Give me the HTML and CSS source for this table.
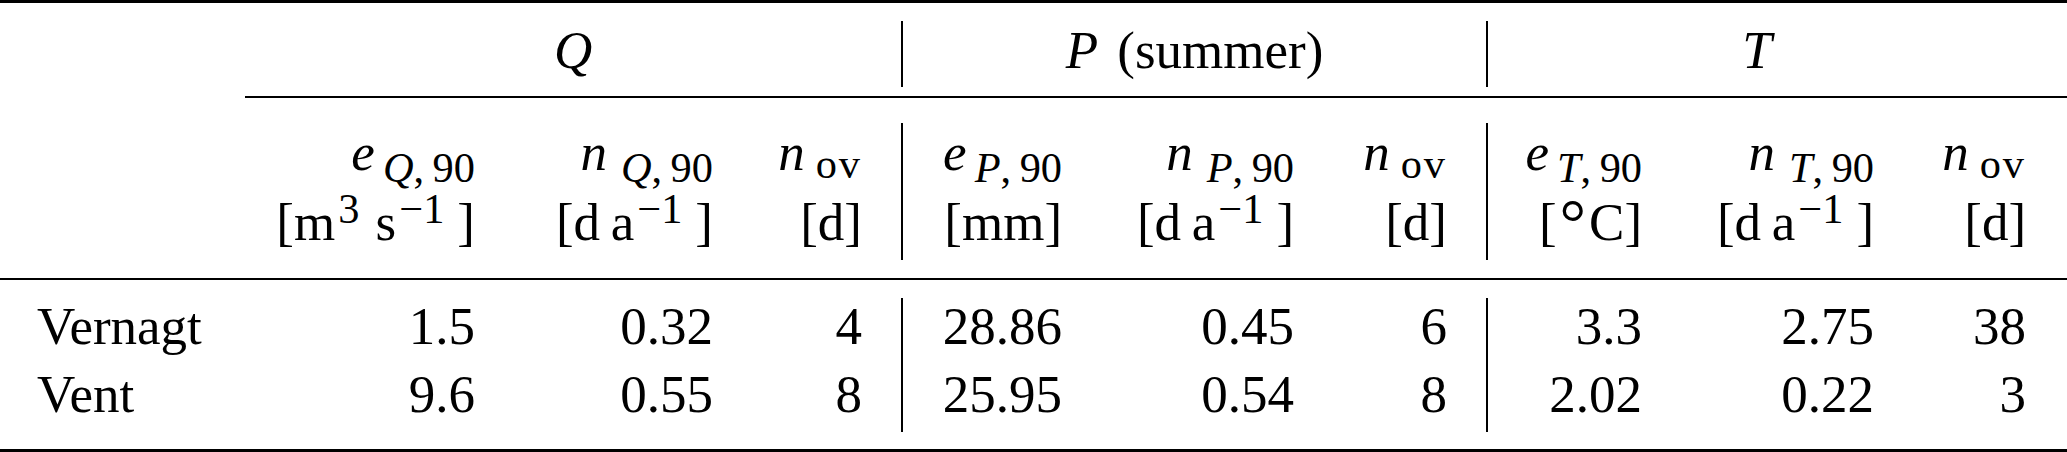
FILE: index.html
```html
<!DOCTYPE html>
<html>
<head>
  <title>Extremes - Vernagt and Vent</title>
  <link rel="stylesheet" href="styles.css">
</head>
<body>
  <table class="extremes">
    <colgroup>
      <col class="w-stub">
      <col class="w-eq"><col class="w-nq"><col class="w-ov1">
      <col class="w-ep"><col class="w-np"><col class="w-ov2">
      <col class="w-et"><col class="w-nt"><col class="w-ov3">
    </colgroup>

    <tr class="groups">
      <td class="stub"><div></div></td>
      <td colspan="3"><div><i>Q</i></div></td>
      <td colspan="3"><div class="vl"><i class="gp">P</i> (summer)</div></td>
      <td colspan="3"><div class="vl"><i>T</i></div></td>
    </tr>

    <tr class="heads">
      <td class="stub"><div></div></td>
      <td><div>
        <div class="sym"><i>e</i><sub><i>Q</i>,&thinsp;90</sub></div>
        <div class="unit">[m<sup>3</sup> s<sup class="end">−1</sup>]</div>
      </div></td>
      <td><div>
        <div class="sym"><i>n</i><sub class="wide"><i>Q</i>,&thinsp;90</sub></div>
        <div class="unit">[d&thinsp;a<sup class="end">−1</sup>]</div>
      </div></td>
      <td><div>
        <div class="sym"><i>n</i><sub class="ov">ov</sub></div>
        <div class="unit">[d]</div>
      </div></td>
      <td><div class="vl">
        <div class="sym"><i>e</i><sub><i>P</i>,&thinsp;90</sub></div>
        <div class="unit">[mm]</div>
      </div></td>
      <td><div>
        <div class="sym"><i>n</i><sub class="wide"><i>P</i>,&thinsp;90</sub></div>
        <div class="unit">[d&thinsp;a<sup class="end">−1</sup>]</div>
      </div></td>
      <td><div>
        <div class="sym"><i>n</i><sub class="ov">ov</sub></div>
        <div class="unit">[d]</div>
      </div></td>
      <td><div class="vl">
        <div class="sym"><i>e</i><sub><i>T</i>,&thinsp;90</sub></div>
        <div class="unit">[<span class="deg">°</span>C]</div>
      </div></td>
      <td><div>
        <div class="sym"><i>n</i><sub class="wide"><i>T</i>,&thinsp;90</sub></div>
        <div class="unit">[d&thinsp;a<sup class="end">−1</sup>]</div>
      </div></td>
      <td><div>
        <div class="sym"><i>n</i><sub class="ov">ov</sub></div>
        <div class="unit">[d]</div>
      </div></td>
    </tr>

    <tr class="data first">
      <td class="stub"><div>Vernagt</div></td>
      <td><div>1.5</div></td>
      <td><div>0.32</div></td>
      <td><div>4</div></td>
      <td><div class="vl">28.86</div></td>
      <td><div>0.45</div></td>
      <td><div>6</div></td>
      <td><div class="vl">3.3</div></td>
      <td><div>2.75</div></td>
      <td><div>38</div></td>
    </tr>
    <tr class="data last">
      <td class="stub"><div>Vent</div></td>
      <td><div>9.6</div></td>
      <td><div>0.55</div></td>
      <td><div>8</div></td>
      <td><div class="vl">25.95</div></td>
      <td><div>0.54</div></td>
      <td><div>8</div></td>
      <td><div class="vl">2.02</div></td>
      <td><div>0.22</div></td>
      <td><div>3</div></td>
    </tr>
  </table>
</body>
</html>
```

FILE: styles.css
```css
body {
  margin: 0;
  background-color: #fff;
  color: #000;
  font-family: "Liberation Serif", "Times New Roman", serif;
  font-size: 53px;
}

.extremes {
  width: 2067px;
  table-layout: fixed;
  border-collapse: separate;
  border-spacing: 0;
}

.w-stub { width: 245px; }
.w-eq { width: 269px; }
.w-nq { width: 238px; }
.w-ov1 { width: 149px; }
.w-ep { width: 200px; }
.w-np { width: 232px; }
.w-ov2 { width: 153px; }
.w-et { width: 195px; }
.w-nt { width: 232px; }
.w-ov3 { width: 154px; }

.extremes td {
  padding: 0 39px 0 0;
  text-align: right;
  vertical-align: top;
  white-space: nowrap;
}

.extremes td.stub {
  padding-left: 37px;
  text-align: left;
}

.extremes td:last-child {
  padding-right: 41px;
}

.vl {
  border-left: 2px solid #000;
}

sub,
sup {
  line-height: 0;
}

sub {
  font-size: 0.8em;
  margin-left: 8px;
  vertical-align: -12px;
}

sub.wide {
  margin-left: 14px;
}

sub.ov {
  margin-left: 11px;
  letter-spacing: 2px;
  vertical-align: -8px;
}

sup {
  font-size: 0.8em;
  margin: 0 3px;
  vertical-align: 17px;
}

sup.end {
  margin-right: 13px;
}

.deg {
  font-size: 1.25em;
  line-height: 0;
  margin: 0 3px;
  vertical-align: -5px;
}

.gp {
  margin-right: 6px;
}

/* group row: Q | P (summer) | T */
.groups td {
  border-top: 3px solid #000;
  padding: 18px 0 9px;
  text-align: center;
  line-height: 58px;
}

.groups td + td {
  border-bottom: 2px solid #000;
}

.groups td > div {
  padding-bottom: 8px;
}

/* symbols and units */
.heads td {
  padding-top: 25px;
  padding-bottom: 18px;
  border-bottom: 2px solid #000;
  line-height: 58px;
}

.heads td > div {
  padding-bottom: 9px;
}

.heads .unit {
  margin-top: 12px;
}

/* values */
.data td {
  line-height: 56px;
}

.data.first td {
  padding-top: 18px;
}

.data.first td > div {
  padding-bottom: 12px;
}

.data.last td {
  padding-bottom: 17px;
  border-bottom: 3px solid #000;
}

.data.last td > div {
  padding-bottom: 10px;
}
```
